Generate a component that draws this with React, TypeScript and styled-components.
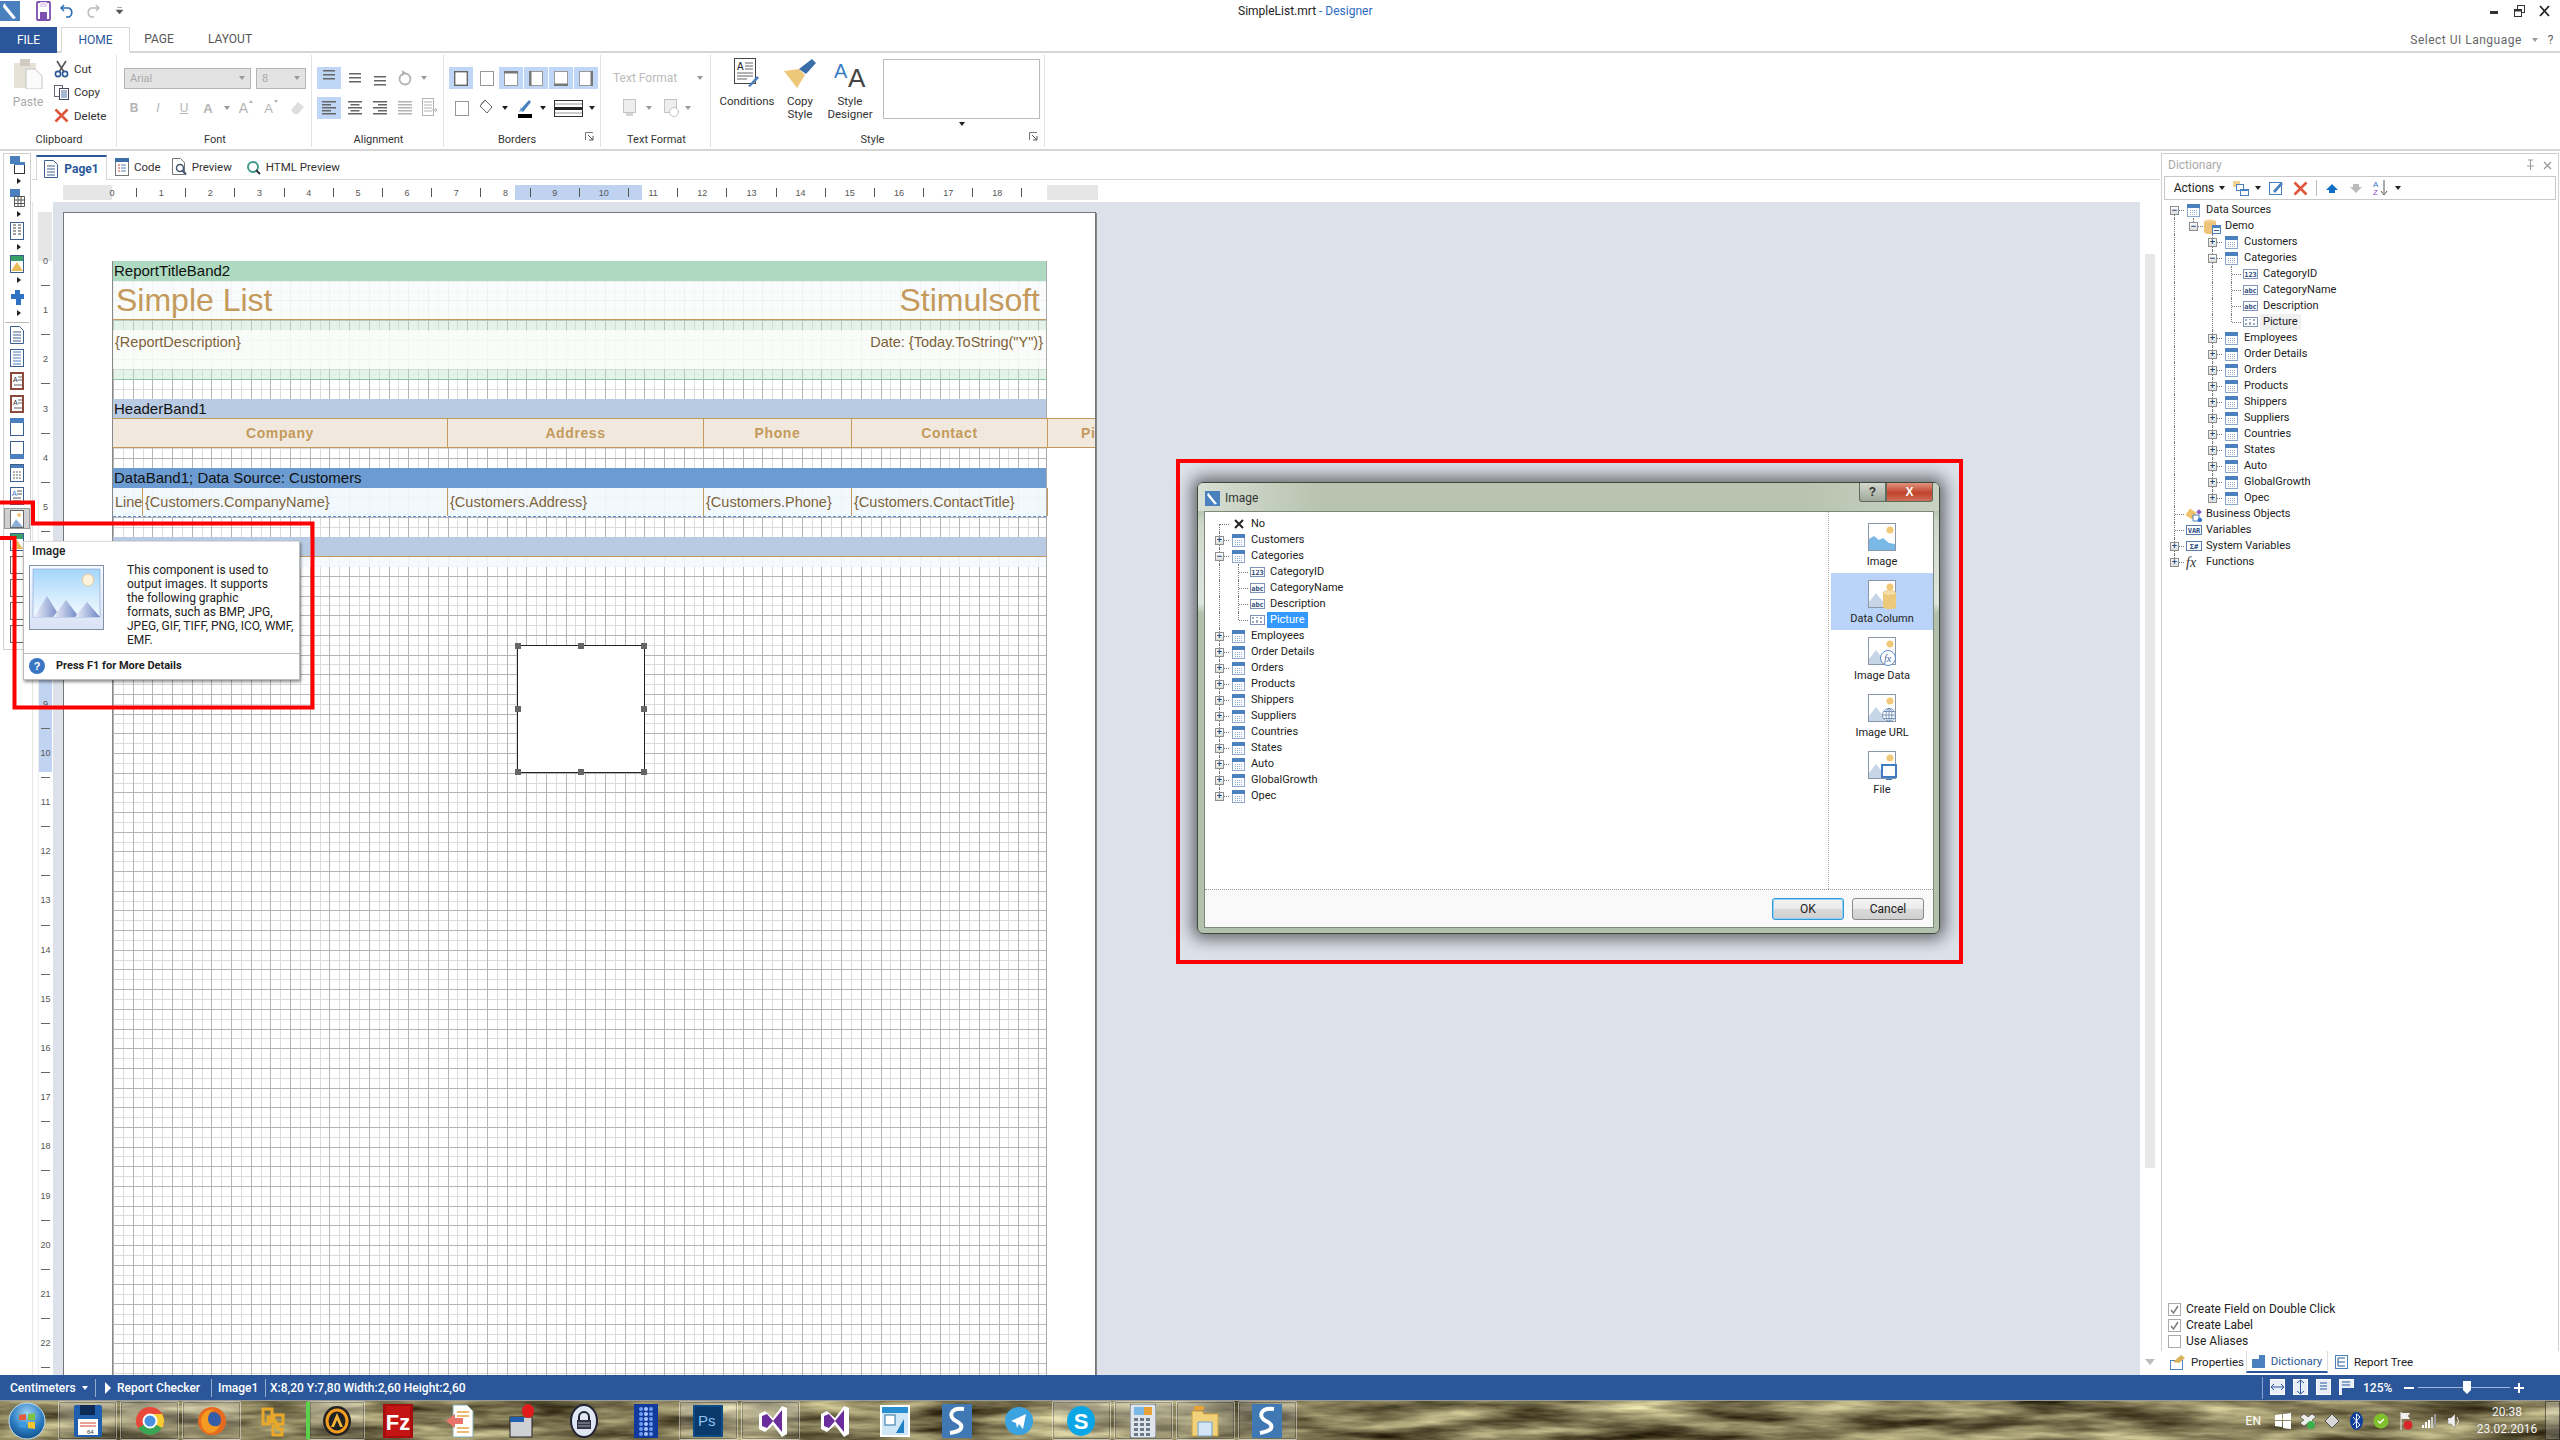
import React from 'react';
import styled, { createGlobalStyle } from 'styled-components';

const UI = `"Roboto","Noto Sans",sans-serif`;
const ARIAL = `"Liberation Sans",Arial,sans-serif`;
const BLUE = '#2b579a';
const TAN = '#c49a5c';

const Global = createGlobalStyle`
  html, body { margin: 0; padding: 0; width: 2560px; height: 1440px; overflow: hidden; background: #fff; }
  body { font-family: ${UI}; font-size: 12px; color: #222; }
  svg { display: block; flex: none; }
`;

const Frame = styled.div`position: relative; width: 2560px; height: 1440px; display: flex; flex-direction: column; overflow: hidden; background: #fff;`;

/* ---------- title ---------- */
const TitleBar = styled.div`height: 27px; flex: none; box-sizing: border-box; padding-bottom: 6px; display: grid; grid-template-columns: 1238px 140px 1fr; align-items: center;`;
const Quick = styled.div`display: flex; align-items: center; gap: 0; height: 21px;`;
const QuickSlot = styled.div<{ $w: number }>`width: ${p => p.$w}px; display: flex; justify-content: center;`;
const TitleText = styled.div`font-size: 12px; white-space: nowrap; color: #222; span { color: #2b6cc4; }`;
const WinButtons = styled.div`display: flex; justify-content: flex-end; align-items: center; gap: 14px; padding-right: 10px;`;

const TabRow = styled.div`height: 26px; box-sizing: border-box; flex: none; display: flex; border-bottom: 2px solid #d6d6d6; align-items: stretch; position: relative;`;
const FileTab = styled.div`width: 57px; background: ${BLUE}; color: #fff; display: flex; align-items: center; justify-content: center; font-size: 12px; margin-bottom: -2px;`;
const RTab = styled.div<{ $on?: boolean; $w: number }>`
  width: ${p => p.$w}px; box-sizing: border-box; display: flex; align-items: center; justify-content: center; font-size: 12px;
  color: ${p => (p.$on ? BLUE : '#555')}; background: #fff;
  ${p => (p.$on ? 'border: 1px solid #d6d6d6; border-bottom: 2px solid #fff; margin-bottom: -2px; margin-left: 4px;' : '')}
`;
const LangBox = styled.div`margin-left: auto; display: flex; align-items: center; gap: 10px; color: #666; font-size: 12px; letter-spacing: .5px; padding: 2px 6px 0 0;`;

/* ---------- ribbon ---------- */
const Ribbon = styled.div`height: 98px; box-sizing: border-box; flex: none; display: flex; border-bottom: 2px solid #d6d6d6;`;
const Group = styled.div<{ $w: number }>`width: ${p => p.$w}px; box-sizing: border-box; flex: none; height: 92px; margin-top: 2px; display: flex; flex-direction: column; border-right: 1px solid #e2e2e2; position: relative;`;
const GroupBody = styled.div<{ $pl?: number }>`height: 76px; flex: none; display: flex; padding-left: ${p => p.$pl ?? 0}px;`;
const GroupLabel = styled.div<{ $pr?: number }>`flex: 1; display: flex; align-items: center; justify-content: center; font-size: 11px; color: #333; padding: 0 ${p => p.$pr ?? 0}px 0 2px;`;
const Launcher = styled.div`position: absolute; right: 6px; bottom: 6px;`;
const Rows = styled.div`display: flex; flex-direction: column; gap: 8px; padding-top: 12px;`;
const ToolRow = styled.div`display: flex; align-items: center; height: 22px;`;
const Cell = styled.div<{ $w?: number; $on?: boolean }>`
  width: ${p => p.$w ?? 25}px; box-sizing: border-box; height: 22px; display: flex; align-items: center; justify-content: center; flex: none;
  background: ${p => (p.$on ? '#bfd6f6' : 'transparent')}; border-right: ${p => (p.$on ? '1px solid #fff' : '0')};
`;
const Combo = styled.div<{ $w: number }>`
  width: ${p => p.$w}px; height: 21px; border: 1px solid #b5b5b5; box-sizing: border-box; background: #e3e3e3; margin-right: 5px;
  display: flex; align-items: center; justify-content: space-between; padding: 0 5px; color: #aaa; font-size: 11px;
`;
const DisLetter = styled.span<{ $b?: boolean; $i?: boolean; $u?: boolean; $s?: number }>`
  font-family: ${ARIAL}; color: #b4b4b4; font-size: ${p => p.$s ?? 12}px;
  font-weight: ${p => (p.$b ? 700 : 400)}; font-style: ${p => (p.$i ? 'italic' : 'normal')};
  text-decoration: ${p => (p.$u ? 'underline' : 'none')};
`;
const GrowMark = styled.span<{ $down?: boolean }>`align-self: flex-start; margin: 3px 0 0 1px; width: 0; height: 0; border-left: 2px solid transparent; border-right: 2px solid transparent;
  ${p => (p.$down ? 'border-top: 3px solid #b4b4b4;' : 'border-bottom: 3px solid #b4b4b4;')}`;
const Caret = styled.span<{ $c?: string }>`width: 0; height: 0; border-left: 3px solid transparent; border-right: 3px solid transparent; border-top: 4px solid ${p => p.$c ?? '#999'}; flex: none;`;
const PasteCol = styled.div`width: 34px; margin-left: 11px; display: flex; flex-direction: column; align-items: center; padding-top: 3px; gap: 6px; color: #aaa; font-size: 12px;`;
const SmallCol = styled.div`margin-left: 9px; display: flex; flex-direction: column; padding-top: 2px;`;
const SmallBtn = styled.div`height: 23.5px; display: flex; align-items: center; gap: 5px; font-size: 11.5px; color: #333;`;
const BigBtn = styled.div<{ $w: number }>`width: ${p => p.$w}px; display: flex; flex-direction: column; align-items: center; padding-top: 3px; font-size: 11.5px; color: #333; text-align: center; line-height: 13px; gap: 7px;`;
const StyleCol = styled.div`display: flex; flex-direction: column; align-items: center; gap: 3px; padding-top: 4px;`;
const StylePreview = styled.div`width: 157px; height: 60px; border: 1px solid #bbb; box-sizing: border-box;`;
const FormatText = styled.div`width: 96px; color: #bbb; font-size: 12px; padding-left: 12px; box-sizing: border-box;`;

/* ---------- main ---------- */
const Main = styled.div`flex: 1; min-height: 0; display: flex;`;
const Toolbox = styled.div`width: 28px; margin: 2px 0 0 3px; height: 497px; flex: none; box-sizing: border-box; border: 1px solid #d0d0d0; display: flex; flex-direction: column; align-items: center;`;
const ToolPair = styled.div`height: 33px; flex: none; display: flex; flex-direction: column; align-items: center;`;
const ToolIco = styled.div<{ $on?: boolean }>`height: ${p => (p.$on ? 21 : 23)}px; width: 26px; flex: none; display: flex; align-items: center; justify-content: center;
  ${p => (p.$on ? 'background:#d0d0d0; border: 1px solid #999; box-sizing: border-box; margin: 1px 0;' : '')}`;
const ToolPairIco = styled.div`height: 21px; display: flex; align-items: center;`;
const ToolArrow = styled.div`height: 12px; display: flex; align-items: center; width: 0; border-left: 0;
  &::before { content: ''; border-top: 3px solid transparent; border-bottom: 3px solid transparent; border-left: 4px solid #222; }`;
const ToolSep = styled.div`height: 1px; width: 24px; background: #bbb; margin: 3px 0 0; flex: none;`;

const Center = styled.div`flex: 1; min-width: 0; display: flex; flex-direction: column; margin-left: 1px;`;
const DocTabs = styled.div`height: 28px; flex: none; display: flex; align-items: stretch; gap: 11px; padding-left: 4px; border-bottom: 1px solid #d8d8d8; margin-right: 0;`;
const PageTab = styled.div`width: 71px; margin-top: 4px; margin-bottom: -1px; box-sizing: border-box; border-top: 2px solid ${BLUE}; border-left: 1px solid #d8d8d8; border-right: 1px solid #d8d8d8; background: #fff; display: flex; align-items: center; justify-content: center; gap: 6px; font-weight: 700; color: ${BLUE}; font-size: 12px;`;
const DocItem = styled.div<{ $ml?: number }>`display: flex; align-items: center; gap: 5px; padding-top: 4px; font-size: 11.5px; color: #333; margin-left: ${p => p.$ml ?? 0}px;`;

const HRuler = styled.div`height: 15px; width: 1035px; margin: 5px 0 2px 31px; background: #e6e6e6; display: flex; flex: none;`;
const RulerTrack = styled.div`margin-left: 49px; width: 935px; height: 15px; background: #fff; display: flex; position: relative;`;
const RulerCell = styled.div<{ $first?: boolean }>`width: 24.6px; flex: none; display: flex; align-items: center; justify-content: center; position: relative; font: 9px ${ARIAL}; color: #555; margin-left: ${p => (p.$first ? '-12.3px' : 0)};`;
const RulerTick = styled.div`width: 1px; height: 9px; background: #555;`;
const RulerMark = styled.div`position: absolute; left: 403px; top: 0; width: 127px; height: 15px; background: #bfd3f0;`;

const Workspace = styled.div`flex: 1; min-height: 0; display: flex;`;
const VRuler = styled.div`width: 21px; flex: none; box-sizing: border-box; padding: 10px 2px 0 5px; border-left: 1px solid #e6e6e6; overflow: hidden;`;
const VTop = styled.div`height: 49px; width: 14px; background: #e6e6e6;`;
const VTrack = styled.div`position: relative; width: 14px; background: #fff; display: flex; flex-direction: column; border-left: 1px solid #eee; box-sizing: border-box;`;
const VCell = styled.div<{ $first?: boolean }>`height: 24.6px; flex: none; display: flex; align-items: center; justify-content: center; position: relative; font: 9px ${ARIAL}; color: #555; margin-top: ${p => (p.$first ? '-12.3px' : 0)};`;
const VTick = styled.div`width: 9px; height: 1px; background: #666;`;
const VMark = styled.div`position: absolute; left: 0; right: 0; top: 384px; height: 127px; background: #c0d3f1;`;

const Canvas = styled.div`flex: 1; min-width: 0; background: #dce1ea; padding: 10px 0 0 10px; box-sizing: border-box; overflow: hidden;`;
const Page = styled.div`width: 1033px; height: 1300px; background: #fff; border: 1px solid #777; border-bottom: 0; box-shadow: 1px 1px 0 #888; box-sizing: border-box; padding: 48px 0 0 48px; overflow: hidden; position: relative;`;
const Sheet = styled.div`
  position: relative; width: 935px; height: 1200px; box-sizing: border-box;
  border-left: 1px solid #888; border-right: 1px solid #aaa;
  background-color: #fff;
  background-image:
    repeating-linear-gradient(to right, #b4b4b4 0, #b4b4b4 1px, transparent 1px, transparent 19.68px),
    repeating-linear-gradient(to bottom, #b4b4b4 0, #b4b4b4 1px, transparent 1px, transparent 19.68px),
    repeating-linear-gradient(to right, #dcdcdc 0, #dcdcdc 1px, transparent 1px, transparent 9.84px),
    repeating-linear-gradient(to bottom, #dcdcdc 0, #dcdcdc 1px, transparent 1px, transparent 9.84px);
`;
const BandTitle = styled.div<{ $bg: string; $mt?: number; $h?: number }>`height: ${p => p.$h ?? 20}px; box-sizing: border-box; background: ${p => p.$bg}; margin-top: ${p => p.$mt ?? 0}px; font: 15px/19px ${ARIAL}; color: #111; padding-left: 1px; white-space: nowrap;`;
const TitleFill = styled.div`height: 39px; background: rgba(248,252,249,.86); border-bottom: 1px solid ${TAN}; display: flex; justify-content: space-between; align-items: center; padding: 0 6px 0 3px; box-sizing: border-box; font: 32px ${ARIAL}; color: ${TAN}; position: relative;`;
const GreenStrip = styled.div<{ $b?: boolean }>`height: 10px; background: rgba(190,226,205,.42); ${p => (p.$b ? 'border-bottom: 1px solid #8cc6a4;' : '')}`;
const DescFill = styled.div`height: 39px; background: rgba(249,252,250,.9); display: flex; justify-content: space-between; align-items: flex-start; padding: 4px 3px 0 2px; box-sizing: border-box; font: 14.5px ${ARIAL}; color: #7d6238;`;
const HeadRow = styled.div`height: 30px; width: 984px; display: flex; background: #f2e9de; border-top: 1px solid ${TAN}; border-bottom: 1px solid ${TAN}; box-sizing: border-box;`;
const HeadCell = styled.div<{ $w: number; $pad?: number }>`width: ${p => p.$w}px; flex: none; box-sizing: border-box; border-right: 1px solid ${TAN}; display: flex; align-items: center; justify-content: ${p => (p.$pad ? 'flex-start' : 'center')}; padding-left: ${p => p.$pad ?? 0}px; font: 700 14px ${ARIAL}; color: ${TAN}; letter-spacing: .6px;`;
const DataRow = styled.div`height: 29px; display: flex; background: rgba(240,247,254,.92); border-bottom: 1px dashed #5f92cc; box-sizing: border-box;`;
const DataCell = styled.div<{ $w: number }>`width: ${p => p.$w}px; flex: none; box-sizing: border-box; border-right: 1px solid ${TAN}; display: flex; align-items: center; padding-left: 2px; font: 14.5px ${ARIAL}; color: #7d6238; white-space: nowrap; overflow: hidden;`;
const FootBand = styled.div`height: 20px; margin-top: 20px; box-sizing: border-box; background: #b8cbe3; border-bottom: 1px solid ${TAN};`;
const FootFill = styled.div`height: 10px; background: rgba(245,249,254,.85);`;
const ImageBox = styled.div`position: absolute; left: 404px; top: 384px; width: 128px; height: 128px; background: #fff; border: 1px solid #222; box-sizing: border-box;`;
const Handle = styled.div<{ $x: number; $y: number }>`position: absolute; width: 6px; height: 6px; background: #666; left: calc(${p => p.$x}% - 3px); top: calc(${p => p.$y}% - 3px);`;

const ScrollCol = styled.div`width: 20px; flex: none; display: flex; flex-direction: column; align-items: center; padding: 52px 0 10px; box-sizing: border-box; background: #fff; justify-content: space-between;`;
const ScrollThumb = styled.div`width: 10px; height: 914px; background: #e8e8e8;`;
const ScrollDown = styled.div`width: 0; height: 0; border-left: 5px solid transparent; border-right: 5px solid transparent; border-top: 6px solid #bbb;`;

/* ---------- right panel ---------- */
const Dock = styled.div`width: 400px; flex: none; margin-top: 2px; display: flex; flex-direction: column;`;
const DockBox = styled.div`flex: 1; min-height: 0; margin: 0 1px 0 1px; border: 1px solid #cfcfcf; border-bottom: 0; display: flex; flex-direction: column;`;
const DockHead = styled.div`height: 22px; flex: none; display: flex; align-items: center; justify-content: space-between; padding: 0 5px 0 6px; color: #aaa; font-size: 12px;`;
const DockTools = styled.div`height: 24px; flex: none; margin: 0 2px 0 2px; border: 1px solid #c8c8c8; box-sizing: border-box; display: flex; align-items: center; padding-left: 7px; font-size: 12px; color: #222;`;
const ToolSlot = styled.div<{ $w: number }>`width: ${p => p.$w}px; display: flex; align-items: center; justify-content: center; flex: none;`;
const Tree = styled.div<{ $pl: number; $pt: number }>`flex: 1; min-height: 0; padding: ${p => p.$pt}px 0 0 ${p => p.$pl}px;`;
const TreeRow = styled.div`height: 16px; display: flex; align-items: center;`;
const Guide = styled.div<{ $v?: boolean }>`width: 19px; height: 16px; flex: none; position: relative;
  ${p => (p.$v ? `&::before { content: ''; position: absolute; left: 9px; top: 0; bottom: 0; border-left: 1px dotted #777; }` : '')}`;
const NodeCell = styled.div<{ $up?: boolean; $down?: boolean }>`
  width: 19px; height: 16px; flex: none; position: relative; display: flex; align-items: center; justify-content: center;
  &::before { content: ''; position: absolute; left: 9px; top: ${p => (p.$up ? 0 : 8)}px; bottom: ${p => (p.$down ? 0 : 8)}px; border-left: 1px dotted #777; }
  &::after { content: ''; position: absolute; left: 10px; right: 0; top: 8px; border-top: 1px dotted #777; }
`;
const Expander = styled.div`position: relative; z-index: 1; width: 9px; height: 9px; box-sizing: border-box; border: 1px solid #8f8f8f; background: linear-gradient(#fff, #dcdcdc); display: flex; align-items: center; justify-content: center; color: #24467a; font: 700 9px/7px ${ARIAL};`;
const IconSlot = styled.div`width: 19px; height: 16px; flex: none; display: flex; align-items: center; justify-content: center;`;
const NodeLabel = styled.div<{ $sel?: 'blue' | 'gray' }>`height: 16px; line-height: 16px; padding: 0 3px; white-space: nowrap; font-size: 11px; color: ${p => (p.$sel === 'blue' ? '#fff' : '#222')};
  background: ${p => (p.$sel === 'blue' ? '#3399ff' : p.$sel === 'gray' ? '#f0f0f0' : 'transparent')};`;
const Checks = styled.div`flex: none; padding: 0 0 2px 6px; display: flex; flex-direction: column;`;
const CheckRow = styled.div`height: 16px; display: flex; align-items: center; gap: 5px; font-size: 12px; color: #222;`;
const CheckBox = styled.div`width: 13px; height: 13px; box-sizing: border-box; border: 1px solid #aaa; display: flex; align-items: center; justify-content: center;`;
const DockTabs = styled.div`height: 24px; flex: none; display: flex; padding-left: 8px; font-size: 11.5px; color: #222;`;
const DockTab = styled.div<{ $on?: boolean; $w: number }>`width: ${p => p.$w}px; display: flex; align-items: center; justify-content: center; gap: 6px; box-sizing: border-box; margin-bottom: 2px;
  ${p => (p.$on ? `color: ${BLUE}; border-left: 1px solid #ddd; border-right: 1px solid #ddd; border-bottom: 2px solid ${BLUE};` : '')}`;

/* ---------- status + taskbar ---------- */
const StatusBar = styled.div`height: 25px; flex: none; background: ${BLUE}; color: #fff; display: flex; align-items: center; font-size: 12px; font-weight: 500;`;
const StatusPart = styled.div<{ $w: number; $sep?: boolean; $pl?: number }>`width: ${p => p.$w}px; flex: none; height: 18px; display: flex; align-items: center; gap: 6px; padding-left: ${p => p.$pl ?? 6}px; box-sizing: border-box; white-space: nowrap; ${p => (p.$sep ? 'border-right: 1px solid rgba(255,255,255,.5);' : '')}`;
const ZoomPanel = styled.div`margin-left: auto; width: 298px; height: 22px; border-left: 1px solid #8aa5cf; display: flex; align-items: center; box-sizing: border-box; padding-left: 7px; gap: 7px;`;
const ZoomText = styled.div`width: 34px; margin: 0 0 0 1px; font-weight: 500;`;
const ZoomSlider = styled.div`display: flex; align-items: center; gap: 4px;`;
const ZoomSign = styled.div`width: 10px; height: 2px; background: #fff; position: relative; flex: none;`;
const ZoomPlus = styled(ZoomSign)`&::after { content: ''; position: absolute; left: 4px; top: -4px; width: 2px; height: 10px; background: #fff; }`;
const ZoomTrack = styled.div`width: 92px; height: 1px; background: #9db6da; position: relative; flex: none;`;
const ZoomThumb = styled.div`position: absolute; left: 45px; top: -6px; width: 8px; height: 9px; background: #fff; &::after { content: ''; position: absolute; top: 9px; left: 0; border-left: 4px solid transparent; border-right: 4px solid transparent; border-top: 4px solid #fff; }`;

const Taskbar = styled.div`height: 40px; flex: none; box-sizing: border-box; border-top: 1px solid #9a9a9a; position: relative; display: flex; align-items: stretch; background: #6e6850; overflow: hidden;`;
const Wallpaper = styled.svg`position: absolute; left: 0; top: 0;`;
const Orb = styled.div`position: relative; width: 58px; box-sizing: border-box; padding-right: 4px; display: flex; align-items: center; justify-content: center; flex: none;`;
const TaskBtn = styled.div<{ $on?: boolean; $hot?: boolean }>`
  position: relative; width: 59px; margin-right: 3.1px; flex: none; display: flex; align-items: center; justify-content: center; box-sizing: border-box;
  ${p => (p.$on ? `background: linear-gradient(rgba(255,255,255,.28), rgba(255,255,255,.08)); border: 1px solid rgba(255,255,255,.35); box-shadow: inset 0 0 0 1px rgba(0,0,0,.25); border-radius: 2px;` : '')}
  ${p => (p.$hot ? `border-left: 4px solid #5ad14b;` : '')}
`;
const Tray = styled.div`position: relative; margin-left: auto; display: flex; align-items: center; color: #fff;`;
const TrayLang = styled.div`font-size: 12px; margin-right: 10px;`;
const TraySlot = styled.div`width: 24.5px; display: flex; justify-content: center;`;
const Clock = styled.div`width: 76px; margin-left: 2px; padding-top: 1px; text-align: center; font-size: 12px; line-height: 17px; color: #f3f3f3;`;
const ShowDesk = styled.div`width: 15px; height: 100%; background: rgba(255,255,255,.22); border: 1px solid rgba(0,0,0,.5); box-sizing: border-box;`;

/* ---------- overlays ---------- */
const RedPath = styled.svg`position: absolute; left: 0; top: 0; z-index: 5;`;
const Tip = styled.div`position: absolute; left: 23px; top: 541px; width: 277px; height: 139px; background: #fff; border: 1px solid #bbb; border-top-color: #ddd; box-sizing: border-box; box-shadow: 1px 2px 3px rgba(0,0,0,.45); z-index: 6; display: flex; flex-direction: column;`;
const TipTitle = styled.div`height: 18px; padding: 0 0 0 8px; box-sizing: border-box; font-size: 12px; font-weight: 500; color: #222; display: flex; align-items: center;`;
const TipBody = styled.div`height: 93px; flex: none; display: flex; padding: 5px 0 0 5px; gap: 23px; box-sizing: border-box;`;
const TipText = styled.div`font-size: 12px; line-height: 14px; color: #222; white-space: nowrap; margin-top: -2px;`;
const TipFoot = styled.div`flex: 1; border-top: 1px solid #bbb; display: flex; align-items: center; padding: 0 0 2px 5px; gap: 11px; font-size: 11px; font-weight: 700; color: #222;`;

const Highlight = styled.div`position: absolute; left: 1176px; top: 459px; width: 787px; height: 505px; box-sizing: border-box; border: 4px solid #f00; z-index: 4; display: flex; padding: 19px 19px 26px 17px;`;
const Dialog = styled.div`flex: 1; border-radius: 6px; border: 1px solid #3c4a3c; box-sizing: border-box; display: flex; flex-direction: column; padding: 0 5px 5px 6px;
  background: linear-gradient(#b8c4b0 0, #b8c4b0 28px, #cfd7cb 40px, #dfe6e2 120px, #b4c0ae 130px, #b4c0ae 100%);
  box-shadow: 0 0 16px 5px rgba(20,20,20,.6);`;
const DlgTitle = styled.div`height: 28px; flex: none; display: flex; background: linear-gradient(to right, #d8dfd4, #b8c4b0 16%, #b8c4b0 82%, #c8d1c2); margin: 0 -5px 0 -6px; padding: 0 6px 0 7px; border-radius: 5px 5px 0 0;`;
const DlgCaption = styled.div`display: flex; align-items: center; gap: 5px; color: #333; font-size: 12px; flex: 1; padding-top: 2px;`;
const CapBtn = styled.div<{ $w: number; $red?: boolean }>`width: ${p => p.$w}px; height: 19px; box-sizing: border-box; border: 1px solid #5f6b5f; border-top: 0; display: flex; align-items: center; justify-content: center; color: ${p => (p.$red ? '#fff' : '#333')}; font: 700 12px ${ARIAL};
  background: ${p => (p.$red ? 'linear-gradient(#e2937f, #c0432a 55%, #d0705a)' : 'linear-gradient(#d4d8d0, #9ea89a)')};
  border-radius: ${p => (p.$red ? '0 0 3px 0' : '0 0 0 3px')};`;
const DlgBody = styled.div`flex: 1; min-height: 0; background: #fff; border: 1px solid #7b8a78; display: flex; flex-direction: column;`;
const DlgMain = styled.div`flex: 1; min-height: 0; display: flex;`;
const DlgOptions = styled.div`width: 105px; flex: none; box-sizing: border-box; border-left: 1px dotted #aaa; padding: 4px 0 0 2px; display: flex; flex-direction: column;`;
const DlgOption = styled.div<{ $on?: boolean }>`height: 57px; flex: none; display: flex; flex-direction: column; align-items: center; justify-content: flex-start; gap: 3px; padding-top: 7px; box-sizing: border-box; font-size: 11px; color: #222; background: ${p => (p.$on ? '#b9d3f9' : 'transparent')};`;
const DlgFoot = styled.div`height: 38px; flex: none; border-top: 1px dotted #999; background: #f9f9f9; display: flex; justify-content: flex-end; align-items: center; gap: 8px; padding: 1px 9px 0 0; box-sizing: border-box;`;
const DlgBtn = styled.div<{ $def?: boolean }>`width: 72px; height: 22px; box-sizing: border-box; border-radius: 3px; border: 1px solid ${p => (p.$def ? '#2f9ad8' : '#8a8a8a')}; ${p => (p.$def ? 'box-shadow: inset 0 0 0 1px #8fd0f3;' : '')} background: linear-gradient(#f4f4f4 0, #ebebeb 48%, #d9d9d9 50%, #d0d0d0); display: flex; align-items: center; justify-content: center; font-size: 12px; color: #222;`;

/* ---------- icons ---------- */
const TableIcon = () => (
  <svg width="13" height="13"><rect x=".5" y=".5" width="12" height="12" fill="#fff" stroke="#8ba6c9" /><rect width="13" height="4" fill="#4a80bd" />
    {[6, 8, 10].map(y => [3, 5, 7, 9].map(x => <rect key={`${x}${y}`} x={x} y={y} width="1" height="1" fill="#8fb0d6" />))}</svg>
);
const FieldIcon = ({ t }: { t?: string }) => (
  <svg width="15" height="10"><rect x=".5" y=".5" width="14" height="9" fill="#fff" stroke="#7e93b5" />
    {t ? <text x="7.5" y="7.6" textAnchor="middle" fontSize="7" fontWeight="700" fontFamily="DejaVu Sans Mono" fill="#33507e">{t}</text>
      : <path d="M3 2v2M7 2v1M11 2v2M3 6v2M7 5v3M11 6v2" stroke="#33507e" />}</svg>
);
const XIcon = () => <svg width="12" height="12"><path d="M2 2l8 8M10 2l-8 8" stroke="#222" strokeWidth="2" /></svg>;
const DbIcon = () => (
  <svg width="17" height="15"><ellipse cx="6" cy="3" rx="6" ry="2.5" fill="#f2d08e" /><rect y="3" width="12" height="10" fill="#edc47a" /><ellipse cx="6" cy="13" rx="6" ry="2" fill="#edc47a" />
    <rect x="8.5" y="6.5" width="8" height="8" fill="#fff" stroke="#4a80bd" /><rect x="8" y="6" width="9" height="3" fill="#4a80bd" /><rect x="10" y="11" width="5" height="1" fill="#35609a" /></svg>
);
const BizIcon = () => (
  <svg width="16" height="15"><rect x="1" y="3" width="8" height="8" fill="#f0c36a" transform="rotate(35 5 7)" /><path d="M7 8h6v6H7z" fill="#fff" stroke="#4a80bd" /><rect x="11" y="3" width="4" height="4" fill="#8a5cc0" transform="rotate(45 13 5)" /><rect x="12" y="11" width="4" height="4" fill="#2f72c4" transform="rotate(45 14 13)" /></svg>
);
const BoxText = ({ t }: { t: string }) => (
  <svg width="16" height="10"><rect x=".5" y=".5" width="15" height="9" fill="#fff" stroke="#5b7bab" /><text x="8" y="7.6" textAnchor="middle" fontSize="7" fontWeight="700" fontFamily="DejaVu Sans Mono" fill="#2b4f82">{t}</text></svg>
);
const FxIcon = () => <svg width="16" height="15"><text x="0" y="12" fontSize="14" fontStyle="italic" fontFamily="Liberation Serif" fill="#333">fx</text></svg>;

type NodeDef = { label: string; depth: number; guides?: boolean[]; exp?: string; icon: React.ReactNode; sel?: 'blue' | 'gray'; up?: boolean; down?: boolean };
const Nodes = ({ rows }: { rows: NodeDef[] }) => (
  <>
    {rows.map((r, i) => (
      <TreeRow key={i}>
        {Array.from({ length: r.depth }).map((_, d) => <Guide key={d} $v={r.guides?.[d]} />)}
        <NodeCell $up={r.up ?? true} $down={r.down ?? true}>{r.exp ? <Expander>{r.exp === '+' ? '+' : '−'}</Expander> : null}</NodeCell>
        <IconSlot>{r.icon}</IconSlot>
        <NodeLabel $sel={r.sel}>{r.label}</NodeLabel>
      </TreeRow>
    ))}
  </>
);
const tableNames = ['Employees', 'Order Details', 'Orders', 'Products', 'Shippers', 'Suppliers', 'Countries', 'States', 'Auto', 'GlobalGrowth', 'Opec'];
const fieldDefs: [string, string | undefined][] = [['CategoryID', '123'], ['CategoryName', 'abc'], ['Description', 'abc'], ['Picture', undefined]];

const dictRows: NodeDef[] = [
  { label: 'Data Sources', depth: 0, exp: '-', icon: <TableIcon />, up: false },
  { label: 'Demo', depth: 1, guides: [true], exp: '-', icon: <DbIcon />, down: false },
  { label: 'Customers', depth: 2, guides: [true, false], exp: '+', icon: <TableIcon /> },
  { label: 'Categories', depth: 2, guides: [true, false], exp: '-', icon: <TableIcon /> },
  ...fieldDefs.map(([l, t], i) => ({ label: l, depth: 3, guides: [true, false, true], icon: <FieldIcon t={t} />, down: i < 3, sel: l === 'Picture' ? 'gray' as const : undefined })),
  ...tableNames.map((l, i) => ({ label: l, depth: 2, guides: [true, false], exp: '+', icon: <TableIcon />, down: i < tableNames.length - 1 })),
  { label: 'Business Objects', depth: 0, icon: <BizIcon /> },
  { label: 'Variables', depth: 0, icon: <BoxText t="VAR" /> },
  { label: 'System Variables', depth: 0, exp: '+', icon: <BoxText t="Σ#" /> },
  { label: 'Functions', depth: 0, exp: '+', icon: <FxIcon />, down: false },
];
const dlgRows: NodeDef[] = [
  { label: 'No', depth: 0, icon: <XIcon />, up: false },
  { label: 'Customers', depth: 0, exp: '+', icon: <TableIcon /> },
  { label: 'Categories', depth: 0, exp: '-', icon: <TableIcon /> },
  ...fieldDefs.map(([l, t], i) => ({ label: l, depth: 1, guides: [true], icon: <FieldIcon t={t} />, down: i < 3, sel: l === 'Picture' ? 'blue' as const : undefined })),
  ...tableNames.map((l, i) => ({ label: l, depth: 0, exp: '+', icon: <TableIcon />, down: i < tableNames.length - 1 })),
];

const ImgIcon = ({ v }: { v: 'image' | 'column' | 'data' | 'url' | 'file' }) => (
  <svg width="30" height="29">
    <rect x="1.5" y=".5" width="27" height={v === 'image' ? 27 : 27} fill="#fff" stroke="#8b97a8" />
    <circle cx="23" cy="7" r="3.5" fill="#f0c878" />
    {v === 'image'
      ? <path d="M2 27V16l5-3 5 4 4-2 6 5 6 1v6z" fill="#7ab8e6" />
      : <path d="M2 27V22l7-9 8 10v4z" fill="#c6d6e8" />}
    {v === 'column' && <g><rect x="16" y="13" width="13" height="14" fill="#edc97c" /><ellipse cx="22.5" cy="13" rx="6.5" ry="2.5" fill="#f6dda6" stroke="#e3bd70" strokeWidth=".6" /><ellipse cx="22.5" cy="27" rx="6.5" ry="2" fill="#edc97c" /></g>}
    {v === 'data' && <g><circle cx="21" cy="21" r="7.5" fill="#fff" stroke="#5b8ac4" /><text x="17" y="25" fontSize="10" fontStyle="italic" fontFamily="Liberation Serif" fill="#3a66a4">fx</text></g>}
    {v === 'url' && <g fill="none" stroke="#5b7fb0" strokeWidth=".8"><circle cx="22" cy="21" r="6.5" fill="#fff" /><ellipse cx="22" cy="21" rx="3" ry="6.5" /><path d="M15.5 21h13M16.5 17.5h11M16.5 24.500h11M22 14.500v13" /></g>}
    {v === 'file' && <g><rect x="15" y="14" width="14" height="12" fill="#fff" stroke="#3f7cc2" strokeWidth="2" /><path d="M22 26v2M19 28.500h6" stroke="#3f7cc2" /></g>}
  </svg>
);

const Gray = '#b4b4b4';
const PasteIcon = () => (
  <svg width="30" height="31"><rect x="1" y="5" width="22" height="25" rx="1" fill="#e6e2d8" /><rect x="7" y="1" width="10" height="7" fill="#d0ccc2" /><path d="M13 11h9l7 7v13H13z" fill="#fbfbfb" stroke="#c4c4c4" /></svg>
);
const CutIcon = () => <svg width="15" height="18"><path d="M3 1l7 11M12 1L5 12" stroke="#555" strokeWidth="1.6" /><circle cx="4" cy="14" r="2.6" fill="none" stroke="#2b579a" strokeWidth="1.6" /><circle cx="11" cy="14" r="2.6" fill="none" stroke="#2b579a" strokeWidth="1.6" /></svg>;
const CopyIcon = () => <svg width="15" height="15"><rect x=".5" y=".5" width="8" height="11" fill="#fff" stroke="#667" /><rect x="5.500" y="3.500" width="9" height="11" fill="#fff" stroke="#445" /><path d="M7 6h6M7 8h6M7 10h6M7 12h6" stroke="#4a6fa5" /></svg>;
const DelIcon = ({ s = 15 }: { s?: number }) => <svg width={s} height={s} viewBox="0 0 15 15"><path d="M1.500 1.500l12 12M13.500 1.500l-12 12" stroke="#e0563c" strokeWidth="2.6" /></svg>;
const Align = ({ mode, dir, c = '#666' }: { mode?: string; dir?: string; c?: string }) => {
  const ys = mode === 't' ? [0, 4, 8] : mode === 'm' ? [3, 7, 11] : mode === 'b' ? [6, 10, 14] : [1, 4, 7, 10, 13];
  const wd = (i: number) => (dir === 'j' ? 14 : i % 2 ? 9 : 14);
  const xs = (w: number) => (dir === 'c' ? (14 - w) / 2 : dir === 'r' ? 14 - w : 0);
  return <svg width="14" height="16">{ys.map((y, i) => <rect key={i} x={mode && mode !== 'x' ? 1 : xs(wd(i))} y={y} width={mode ? 12 : wd(i)} height="1.500" fill={c} />)}</svg>;
};
const RotIcon = () => <svg width="14" height="18"><circle cx="7" cy="10" r="5.500" fill="none" stroke={Gray} strokeWidth="1.800" /><path d="M4 1l4 3-4 3z" fill={Gray} /></svg>;
const SpecialAlign = () => <svg width="16" height="20"><rect x=".5" y=".5" width="11" height="17" fill="#fff" stroke={Gray} /><path d="M2 4h8M2 7h8M2 10h8M2 13h8" stroke={Gray} /><path d="M10 12h5l-2-2M15 12l-2 2" stroke={Gray} fill="none" /></svg>;
const Bord = ({ s, c = '#777' }: { s: string; c?: string }) => (
  <svg width="14" height="15"><rect x=".5" y=".5" width="13" height="14" fill="#fff" stroke={s === 'all' ? '#666' : '#999'} strokeWidth={s === 'all' ? 1.800 : 1} />
    {s === 't' && <rect width="14" height="2.500" fill={c} />}{s === 'b' && <rect y="12.500" width="14" height="2.500" fill={c} />}{s === 'l' && <rect width="2.500" height="15" fill={c} />}{s === 'r' && <rect x="11.500" width="2.500" height="15" fill={c} />}</svg>
);
const Fill = () => <svg width="16" height="18"><path d="M7 1l7 7-5 6-7-7z" fill="#fff" stroke="#666" /><path d="M3 6l4-5" stroke="#666" /></svg>;
const Pen = () => <svg width="16" height="20"><path d="M3 12L12 2l2 2-8 10z" fill="#4a80bd" /><path d="M4 9l-2 5 3-1" fill="#7aa7d8" /><rect x="1" y="16" width="14" height="4" fill="#000" /></svg>;
const LineStyle = () => <svg width="29" height="17"><rect x=".5" y=".5" width="28" height="16" fill="#fff" stroke="#333" /><rect x="1" y="7" width="27" height="3" fill="#222" /><path d="M1 4h27M1 13h27" stroke="#999" /></svg>;
const FmtIcon = ({ k }: { k: number }) => <svg width="15" height="18"><rect x=".5" y=".5" width="12" height="13" fill="#eee" stroke="#c4c4c4" />{k ? <circle cx="10" cy="13" r="4.500" fill="#fff" stroke="#c0c0c0" /> : <path d="M3 14h7v3H3z" fill="#d4d4d4" />}</svg>;
const Eraser = () => <svg width="15" height="14"><path d="M8 1l6 5-6 7H4L1 9z" fill="#ddd" /></svg>;
const Launch = () => <svg width="9" height="9"><path d="M.5 8V.5H8" fill="none" stroke="#777" /><path d="M3 3l5 5M8 4v4H4" fill="none" stroke="#555" /></svg>;
const ConditionsIcon = () => <svg width="26" height="30"><rect x=".5" y=".5" width="21" height="25" fill="#fff" stroke="#444" /><text x="3" y="12" fontSize="10" fill="#222" fontFamily="Liberation Sans">A</text><path d="M11 5h8M11 8h8M11 11h8M3 15h16M3 18h16M3 21h10" stroke="#666" /><path d="M14 28l9-10 2 2-9 9z" fill="#4a80bd" /></svg>;
const BroomIcon = () => <svg width="34" height="30"><path d="M1 13l15-2 6 6-8 13z" fill="#eec87a" /><path d="M16 11l13-10 4 4-10 11z" fill="#3a6ea8" /></svg>;
const StyleIcon = () => <svg width="33" height="30"><text x="0" y="20" fontSize="20" fill="#3a7cc2" fontFamily="Liberation Sans">A</text><text x="14" y="29" fontSize="26" fill="#444" fontFamily="Liberation Sans">A</text></svg>;

const TBox = ({ k }: { k: string }) => {
  const base = <rect x=".5" y=".5" width="13" height="17" fill="#fff" stroke="#3d5f8e" />;
  switch (k) {
    case 'stack': return <svg width="16" height="20"><rect x="1" y="1" width="10" height="8" fill="#4a80bd" /><rect x="5.500" y="7.500" width="10" height="11" fill="#fff" stroke="#333" /><rect x="5" y="7" width="11" height="3" fill="#4a80bd" /></svg>;
    case 'table': return <svg width="16" height="20"><rect x="1" y="1" width="10" height="8" fill="#4a80bd" /><path d="M5.500 8.500h10v10h-10zM5.500 12h10M5.500 15.500h10M9 8.500v10M12 8.500v10" fill="#fff" stroke="#555" /></svg>;
    case 'multi': return <svg width="14" height="18">{base}<path d="M3 3h3M8 3h3M3 6h3M8 6h3M3 9h3M8 9h3M3 12h3M8 12h3" stroke="#444" /></svg>;
    case 'picg': return <svg width="14" height="18">{base}<path d="M1 16l6-9 6 9z" fill="#e9bc5a" /><rect x="1" y="1" width="12" height="5" fill="#3aa06a" /></svg>;
    case 'puzzle': return <svg width="15" height="18"><path d="M1 6h4V2h5v4h4v5h-3v6H6v-6H1z" fill="#2f72c4" /></svg>;
    case 'doc': return <svg width="14" height="18"><path d="M.5.5h9l4 4v13H.5z" fill="#fff" stroke="#3d5f8e" /><path d="M3 6h8M3 9h8M3 12h8M3 15h8" stroke="#3d5f8e" /></svg>;
    case 'lines': return <svg width="14" height="18">{base}<path d="M3 3h8M3 6h8M3 9h8M3 12h8M3 15h8" stroke="#4a80bd" /></svg>;
    case 'code': return <svg width="14" height="18"><rect x=".5" y=".5" width="13" height="17" fill="#fff" stroke="#777" /><rect width="14" height="4" fill="#3d6ea8" /><path d="M3 7h2M3 10h2M3 13h2" stroke="#d0473a" /><path d="M6 7h5M6 10h5M6 13h5" stroke="#5a7fb0" /></svg>;
    case 'preview': return <svg width="15" height="18"><path d="M.5.5h8l4 4v12H.5z" fill="#fff" stroke="#777" /><circle cx="8" cy="10" r="3.500" fill="#fff" stroke="#44566c" strokeWidth="1.500" /><path d="M10.500 12.500l3.500 4" stroke="#44566c" strokeWidth="2" /></svg>;
    case 'ab': return <svg width="14" height="18"><rect width="14" height="18" fill="#fff" /><rect y="0" width="14" height="2" fill="#8b4a3a" /><rect y="16" width="14" height="2" fill="#8b4a3a" /><rect width="2" height="18" fill="#8b4a3a" /><rect x="12" width="2" height="18" fill="#8b4a3a" /><text x="3" y="10" fontSize="7" fill="#333" fontFamily="Liberation Sans">A</text><path d="M8 5h4M8 8h4M4 13h8" stroke="#666" /></svg>;
    case 'top': return <svg width="14" height="18">{base}<rect width="14" height="5" fill="#4a80bd" /></svg>;
    case 'bot': return <svg width="14" height="18">{base}<rect y="13" width="14" height="5" fill="#4a80bd" /></svg>;
    case 'grid': return <svg width="14" height="18">{base}<rect x="1" y="1" width="12" height="3" fill="#4a80bd" /><path d="M3 8h8M3 11h8M3 14h8" stroke="#666" strokeDasharray="2 1" /></svg>;
    case 'text': return <svg width="14" height="18">{base}<text x="2" y="9" fontSize="7" fill="#2f72c4" fontFamily="Liberation Sans">A</text><path d="M7 4h5M7 7h5M3 11h8M3 14h8" stroke="#555" /></svg>;
    case 'img': return <svg width="14" height="18"><rect x=".5" y=".5" width="13" height="17" fill="#fff" stroke="#666" /><circle cx="9" cy="5" r="2" fill="#f0c878" /><path d="M1 17l5-8 7 8z" fill="#8fb0d6" /></svg>;
    default: return <svg width="14" height="18"><rect x=".5" y=".5" width="13" height="17" fill="#fff" stroke="#666" /></svg>;
  }
};

const TipPicture = () => (
  <svg width="75" height="65">
    <defs>
      <linearGradient id="sky" x1="0" y1="0" x2="0" y2="1"><stop offset="0" stopColor="#a5d6fb" /><stop offset="1" stopColor="#f4fbff" /></linearGradient>
      <linearGradient id="mt" x1="0" y1="0" x2="1" y2="0"><stop offset="0" stopColor="#eef1fb" /><stop offset="1" stopColor="#6d86c4" /></linearGradient>
      <linearGradient id="ft" x1="0" y1="0" x2="0" y2="1"><stop offset="0" stopColor="#f8fbff" /><stop offset="1" stopColor="#d9e3f5" /></linearGradient>
    </defs>
    <rect x=".5" y=".5" width="74" height="64" fill="url(#ft)" stroke="#8492a8" />
    <rect x="4" y="4" width="67" height="48" fill="url(#sky)" stroke="#7f9fd0" strokeWidth=".6" />
    <ellipse cx="59" cy="15" rx="5.500" ry="6" fill="#fdf3dc" stroke="#efc89a" />
    <path d="M5 52L18 31l13 21z" fill="url(#mt)" /><path d="M24 52l13-17 13 17z" fill="url(#mt)" /><path d="M46 52l12-15 13 15z" fill="url(#mt)" />
  </svg>
);

const Save = ({ c }: { c: string }) => <svg width="15" height="20"><rect x="1" y="1" width="13" height="18" rx="1" fill="#fff" stroke={c} strokeWidth="1.800" /><rect x="4" y="11" width="7" height="7" fill={c} /><rect x="4" y="1" width="7" height="5" fill="#e8d8f2" /></svg>;
const AppLogo = ({ s = 20 }: { s?: number }) => <svg width={s} height={s}><rect width={s} height={s} fill="#4a80bd" /><path d={`M${s * .2} ${s * .1}L${s * .8} ${s * .85}L${s * .65} ${s * .9}L${s * .15} ${s * .3}z`} fill="#fff" /></svg>;

const ic: Record<string, React.ReactNode> = {
  orb: <svg width="38" height="38"><defs><radialGradient id="o" cx=".5" cy=".3" r=".8"><stop offset="0" stopColor="#9fd4f4" /><stop offset=".55" stopColor="#2b7cc0" /><stop offset="1" stopColor="#0b3f78" /></radialGradient></defs><circle cx="19" cy="19" r="18" fill="url(#o)" stroke="#c7dff0" /><path d="M11 13l7-1v6h-7z" fill="#e25a3c" /><path d="M20 12l7-1v7h-7z" fill="#7cc243" /><path d="M11 20h7v6l-7-1z" fill="#3f9be0" /><path d="M20 20h7v7l-7-1z" fill="#f5c531" /></svg>,
  save: <svg width="30" height="34"><rect x="1" y="1" width="28" height="32" rx="2" fill="#1f5fae" /><rect x="7" y="1" width="15" height="10" fill="#0d2a56" /><rect x="5" y="15" width="20" height="16" fill="#fff" /><path d="M7 19h16M7 22h16" stroke="#c43" /><text x="14" y="30" fontSize="6" fill="#333" fontFamily="Liberation Sans">64</text></svg>,
  chrome: <svg width="30" height="30" viewBox="0 0 30 30"><circle cx="15" cy="15" r="14" fill="#e8483a" /><path d="M15 15L27 22a14 14 0 0 1-12 7 14 14 0 0 1-12-7z" fill="#3aa655" /><path d="M15 15l12 7a14 14 0 0 0 0-14H15z" fill="#f7cc33" /><circle cx="15" cy="15" r="6.500" fill="#4a90e0" stroke="#fff" strokeWidth="2" /></svg>,
  firefox: <svg width="30" height="30"><circle cx="15" cy="15" r="14" fill="#e86a1e" /><circle cx="16" cy="14" r="8" fill="#355da8" /><path d="M4 15c0-7 6-12 13-11-4 2-6 5-6 9 0 6 6 9 12 6-2 5-6 8-10 8C8 27 4 21 4 15z" fill="#f39a21" /></svg>,
  chain: <svg width="26" height="32"><path d="M2 4h9v8h-4v3h6v-5h9v9h-5v5h4v6h-9v-9h3v-4H8v2H2z" fill="none" stroke="#e8a82a" strokeWidth="3" /></svg>,
  aimp: <svg width="30" height="32"><ellipse cx="15" cy="16" rx="14" ry="15" fill="#222" /><ellipse cx="15" cy="16" rx="10" ry="11" fill="none" stroke="#f39c1f" strokeWidth="3" /><path d="M15 8l6 14h-3l-3-7-3 7H9z" fill="#f5b63a" /></svg>,
  fz: <svg width="30" height="34"><rect width="30" height="34" fill="#a80d0d" /><rect x="3" y="2" width="24" height="30" fill="#c41515" /><text x="15" y="26" textAnchor="middle" fontSize="22" fontWeight="700" fill="#fff" fontFamily="Liberation Sans">Fz</text></svg>,
  docarrow: <svg width="30" height="34"><path d="M8 1h14l6 6v26H8z" fill="#fff" stroke="#8aa" /><path d="M12 8h12M12 12h12M12 24h12M12 28h12" stroke="#e8a440" strokeWidth="1.500" /><path d="M1 17l9-7v4h8v6h-8v4z" fill="#e8746a" /></svg>,
  balloon: <svg width="30" height="34"><rect x="3" y="13" width="22" height="20" fill="#cfd0d3" stroke="#222" /><rect x="3" y="13" width="14" height="5" fill="#1f5fae" /><ellipse cx="21" cy="7" rx="6" ry="7" fill="#e01b1b" /></svg>,
  keep: <svg width="30" height="34"><ellipse cx="15" cy="17" rx="13" ry="16" fill="#dfe7f4" stroke="#223" strokeWidth="2" /><path d="M10 17v-4a5 5 0 0 1 10 0v4" fill="none" stroke="#223" strokeWidth="2" /><rect x="8" y="16" width="14" height="9" fill="#334" /><path d="M9 19h12M9 22h12" stroke="#9ab" /></svg>,
  dots: <svg width="24" height="34"><rect width="24" height="34" fill="#123a9c" />{[5, 10, 15, 20, 25, 30].map(y => <g key={y}><circle cx="7" cy={y} r="2" fill="#6d9cf0" /><circle cx="12" cy={y} r="2" fill="#a8c6ff" /><circle cx="17" cy={y} r="2" fill="#6d9cf0" /></g>)}</svg>,
  ps: <svg width="30" height="32"><rect width="30" height="32" rx="1" fill="#0d4a86" /><rect x="2" y="2" width="26" height="28" fill="#0a3a6c" /><text x="5" y="21" fontSize="15" fill="#8cc4f0" fontFamily="Liberation Sans">Ps</text></svg>,
  vs: <svg width="32" height="34"><path d="M4 10l6-3 8 7 9-12 5 2v26l-5 3-9-12-8 7-6-3z" fill="#fff" /><path d="M7 12l5-2 6 7-6 7-5-2zM27 6v22l-9-11z" fill="#6a2d9b" /></svg>,
  sq: <svg width="30" height="32"><rect width="30" height="32" fill="#fff" /><rect x="2" y="2" width="26" height="28" fill="#cfe6f6" /><rect x="2" y="2" width="26" height="6" fill="#2a8fd0" /><rect x="5" y="10" width="10" height="10" fill="#fff" stroke="#2a6fa0" /><path d="M16 28l8-14v14z" fill="#1f7fbf" /></svg>,
  sti: <svg width="30" height="34"><rect width="30" height="34" fill="#3f78b2" /><path d="M22 5C8 3 6 13 14 17s8 10-6 12" fill="none" stroke="#fff" strokeWidth="4" /></svg>,
  tg: <svg width="30" height="30"><circle cx="15" cy="15" r="14" fill="#3ba3e0" /><path d="M7 15l15-7-3 15-4-5-2 4-1-5z" fill="#fff" /></svg>,
  sk: <svg width="30" height="32"><ellipse cx="15" cy="16" rx="14" ry="15" fill="#0ba6e6" /><text x="15" y="24" textAnchor="middle" fontSize="22" fontWeight="700" fill="#fff" fontFamily="Liberation Sans">S</text></svg>,
  calc: <svg width="26" height="34"><rect width="26" height="34" rx="2" fill="#dfe5ea" stroke="#5b6a78" /><rect x="4" y="3" width="18" height="8" fill="#7ab8e6" /><rect x="14" y="3" width="8" height="8" fill="#e8a23a" />{[14, 19, 24, 29].map(y => [4, 10, 16].map(x => <rect key={`${x}${y}`} x={x} y={y} width="4" height="3" fill="#6a7a88" />))}</svg>,
  folder: <svg width="30" height="34"><path d="M2 7h10l2 3h14v22H2z" fill="#f1d27a" stroke="#c9a03f" /><rect x="4" y="2" width="10" height="4" fill="#e8a23a" /><path d="M8 18h14v14H8z" fill="#d4e6f5" stroke="#6fa0c8" /></svg>,
};
const taskItems: { k: string; on?: boolean; hot?: boolean }[] = [
  { k: 'save', on: true }, { k: 'chrome', on: true }, { k: 'firefox', on: true }, { k: 'chain' }, { k: 'aimp', on: true, hot: true }, { k: 'fz' }, { k: 'docarrow' }, { k: 'balloon' }, { k: 'keep' }, { k: 'dots' },
  { k: 'ps', on: true }, { k: 'vs', on: true }, { k: 'vs' }, { k: 'sq' }, { k: 'sti' }, { k: 'tg' }, { k: 'sk', on: true }, { k: 'calc', on: true }, { k: 'folder', on: true }, { k: 'sti', on: true },
];
const trayIcons: React.ReactNode[] = [
  <svg width="16" height="16"><path d="M0 2l7-1v6H0zM8 1l8-1v7H8zM0 8h7v6l-7-1zM8 8h8v8l-8-1z" fill="#fff" /></svg>,
  <svg width="16" height="18"><path d="M4 2l4 3 4-3 4 3-4 3 4 3-4 3-4-3-4 3-4-3 4-3-4-3z" fill="#eee" stroke="#333" strokeWidth=".5" /><circle cx="11" cy="13" r="4" fill="#3cae4a" /></svg>,
  <svg width="16" height="16"><path d="M8 1l7 7-7 7-7-7z" fill="#d8d8d8" stroke="#555" /></svg>,
  <svg width="13" height="18"><ellipse cx="6.500" cy="9" rx="6.500" ry="9" fill="#0f3f9c" /><path d="M3 5l7 8-3.500 3V2L10 5l-7 8" fill="none" stroke="#fff" /></svg>,
  <svg width="16" height="16"><circle cx="8" cy="8" r="7.500" fill="#7fc02c" /><path d="M5 8l2 2 4-4" fill="none" stroke="#fff" strokeWidth="1.500" /></svg>,
  <svg width="14" height="18"><path d="M2 0v18" stroke="#eee" /><path d="M2 1h9l-2 3 2 3H2z" fill="#eee" /><circle cx="9" cy="13" r="4.500" fill="#d8252a" /></svg>,
  <svg width="16" height="14"><rect x="0" y="11" width="2" height="3" fill="#fff" /><rect x="3" y="8" width="2" height="6" fill="#fff" /><rect x="6" y="6" width="2" height="8" fill="#fff" /><rect x="9" y="3" width="2" height="11" fill="#ccc" /><rect x="12" y="0" width="2" height="14" fill="#999" /></svg>,
  <svg width="13" height="16"><path d="M0 5h3l4-4v14l-4-4H0z" fill="#eee" stroke="#666" strokeWidth=".4" /><path d="M9 4q3 4 0 8" fill="none" stroke="#ddd" /></svg>,
];
const ZoomIcon = ({ k }: { k: number }) => <svg width="16" height="17"><rect x=".5" y=".5" width="14" height="15" fill="#e8eef7" stroke="#fff" />{k === 0 && <path d="M1 8h13M4 5l-3 3 3 3M11 5l3 3-3 3" stroke="#2b579a" fill="none" />}{k === 1 && <path d="M7.500 1v14M4 4l3.500-3 3.500 3M4 12l3.500 3 3.500-3" stroke="#2b579a" fill="none" />}{k === 2 && <path d="M4 4h7M4 7h7M4 10h7" stroke="#2b579a" />}{k === 3 && <g><path d="M3 3h8M3 6h8" stroke="#2b579a" /><rect x="3" y="9" width="13" height="8" fill="#2b579a" /></g>}</svg>;

const headCols: [string, number][] = [['Company', 335], ['Address', 256], ['Phone', 148], ['Contact', 196]];
const dataCols: [string, number][] = [['Line', 30], ['{Customers.CompanyName}', 305], ['{Customers.Address}', 256], ['{Customers.Phone}', 148], ['{Customers.ContactTitle}', 196]];
const toolPairs = ['stack', 'table', 'multi', 'picg', 'puzzle'];
const toolSingles = ['doc', 'lines', 'ab', 'ab', 'top', 'bot', 'grid', 'text', 'img', 'picg', 'plain', 'plain', 'plain', 'plain'];

export default function App() {
  return (
    <Frame>
      <Global />
      <TitleBar>
        <Quick>
          <AppLogo />
          <QuickSlot $w={46}><Save c="#7d4fb0" /></QuickSlot>
          <QuickSlot $w={4}><svg width="16" height="14"><path d="M4 1L1 4l3 3M1 4h8a5 5 0 0 1 0 9H6" fill="none" stroke="#2b6cb4" strokeWidth="1.500" /></svg></QuickSlot>
          <QuickSlot $w={44}><svg width="16" height="14"><path d="M12 1l3 3-3 3M15 4H7a5 5 0 0 0 0 9h3" fill="none" stroke="#bbb" strokeWidth="1.500" /></svg></QuickSlot>
          <QuickSlot $w={10}><svg width="7" height="8"><path d="M1 .5h5M0 3l3.500 4L7 3z" fill="#555" stroke="#555" strokeWidth=".5" /></svg></QuickSlot>
        </Quick>
        <TitleText>SimpleList.mrt <span>- Designer</span></TitleText>
        <WinButtons>
          <svg width="10" height="6"><rect y="3" width="8" height="3" fill="#333" /></svg>
          <svg width="11" height="12"><rect x="3.500" y=".5" width="7" height="7" fill="none" stroke="#333" /><rect x=".5" y="4.500" width="7" height="7" fill="#fff" stroke="#333" /><rect x=".5" y="4.500" width="7" height="2" fill="#333" /></svg>
          <svg width="11" height="12"><path d="M1 1l9 10M10 1L1 11" stroke="#222" strokeWidth="1.800" /></svg>
        </WinButtons>
      </TitleBar>

      <TabRow>
        <FileTab>FILE</FileTab>
        <RTab $on $w={69}>HOME</RTab>
        <RTab $w={58}>PAGE</RTab>
        <RTab $w={84}>LAYOUT</RTab>
        <LangBox>Select UI Language <Caret /><span>?</span></LangBox>
      </TabRow>

      <Ribbon>
        <Group $w={117}>
          <GroupBody>
            <PasteCol><PasteIcon />Paste</PasteCol>
            <SmallCol>
              <SmallBtn><CutIcon />Cut</SmallBtn>
              <SmallBtn><CopyIcon />Copy</SmallBtn>
              <SmallBtn><DelIcon />Delete</SmallBtn>
            </SmallCol>
          </GroupBody>
          <GroupLabel>Clipboard</GroupLabel>
        </Group>
        <Group $w={195}>
          <GroupBody $pl={7}>
            <Rows>
              <ToolRow><Combo $w={127}>Arial<Caret /></Combo><Combo $w={50}>8<Caret /></Combo></ToolRow>
              <ToolRow>
                <Cell $w={20}><DisLetter $b>B</DisLetter></Cell>
                <Cell $w={28}><DisLetter $i>I</DisLetter></Cell>
                <Cell $w={24}><DisLetter $u>U</DisLetter></Cell>
                <Cell $w={24}><DisLetter $b $s={13}>A</DisLetter></Cell>
                <Cell $w={14}><Caret /></Cell>
                <Cell $w={24}><DisLetter $s={14}>A</DisLetter><GrowMark /></Cell>
                <Cell $w={26}><DisLetter $s={13}>A</DisLetter><GrowMark $down /></Cell>
                <Cell $w={26}><Eraser /></Cell>
              </ToolRow>
            </Rows>
          </GroupBody>
          <GroupLabel>Font</GroupLabel>
        </Group>
        <Group $w={132}>
          <GroupBody $pl={5}>
            <Rows>
              <ToolRow>
                <Cell $on><Align mode="t" /></Cell><Cell><Align mode="m" /></Cell><Cell><Align mode="b" /></Cell><Cell><RotIcon /></Cell><Cell $w={14}><Caret /></Cell>
              </ToolRow>
              <ToolRow>
                <Cell $on><Align dir="l" /></Cell><Cell><Align dir="c" /></Cell><Cell><Align dir="r" /></Cell><Cell><Align dir="j" c="#b4b4b4" /></Cell><Cell><SpecialAlign /></Cell>
              </ToolRow>
            </Rows>
          </GroupBody>
          <GroupLabel>Alignment</GroupLabel>
        </Group>
        <Group $w={157}>
          <GroupBody $pl={5}>
            <Rows>
              <ToolRow>
                <Cell $on><Bord s="all" /></Cell><Cell><Bord s="none" /></Cell><Cell $on><Bord s="t" /></Cell><Cell $on><Bord s="l" /></Cell><Cell $on><Bord s="b" /></Cell><Cell $on><Bord s="r" /></Cell>
              </ToolRow>
              <ToolRow>
                <Cell><Bord s="none" c="#555" /></Cell><Cell $w={24}><Fill /></Cell><Cell $w={14}><Caret $c="#222" /></Cell><Cell $w={26}><Pen /></Cell><Cell $w={10}><Caret $c="#222" /></Cell><Cell $w={41}><LineStyle /></Cell><Cell $w={6}><Caret $c="#222" /></Cell>
              </ToolRow>
            </Rows>
          </GroupBody>
          <GroupLabel $pr={12}>Borders</GroupLabel>
          <Launcher><Launch /></Launcher>
        </Group>
        <Group $w={110}>
          <GroupBody>
            <Rows>
              <ToolRow><FormatText>Text Format</FormatText><Caret /></ToolRow>
              <ToolRow>
                <Cell $w={19} />
                <Cell $w={20}><FmtIcon k={0} /></Cell><Cell $w={18}><Caret /></Cell><Cell $w={26}><FmtIcon k={1} /></Cell><Cell $w={8}><Caret /></Cell>
              </ToolRow>
            </Rows>
          </GroupBody>
          <GroupLabel>Text Format</GroupLabel>
        </Group>
        <Group $w={334}>
          <GroupBody>
            <BigBtn $w={72}><ConditionsIcon />Conditions</BigBtn>
            <BigBtn $w={34}><BroomIcon />Copy Style</BigBtn>
            <BigBtn $w={66}><StyleIcon />Style Designer</BigBtn>
            <StyleCol><StylePreview /><Caret $c="#222" /></StyleCol>
          </GroupBody>
          <GroupLabel $pr={12}>Style</GroupLabel>
          <Launcher><Launch /></Launcher>
        </Group>
      </Ribbon>

      <Main>
        <Toolbox>
          {toolPairs.map(k => <ToolPair key={k}><ToolPairIco><TBox k={k} /></ToolPairIco><ToolArrow /></ToolPair>)}
          <ToolSep />
          {toolSingles.map((k, i) => <ToolIco key={i} $on={i === 8}><TBox k={k} /></ToolIco>)}
        </Toolbox>
        <Center>
          <DocTabs>
            <PageTab><TBox k="doc" />Page1</PageTab>
            <DocItem $ml={-3}><TBox k="code" />Code</DocItem>
            <DocItem><TBox k="preview" />Preview</DocItem>
            <DocItem $ml={4}><svg width="14" height="15"><circle cx="6" cy="7" r="5" fill="#fff" stroke="#3f9a8c" strokeWidth="2" /><path d="M9 10l4 4" stroke="#334" strokeWidth="2" /></svg>HTML Preview</DocItem>
          </DocTabs>
          <HRuler>
            <RulerTrack>
              <RulerMark />
              {Array.from({ length: 38 }).map((_, i) => (
                <RulerCell key={i} $first={i === 0}>{i % 2 === 0 ? <span>{i / 2}</span> : <RulerTick />}</RulerCell>
              ))}
            </RulerTrack>
          </HRuler>
          <Workspace>
            <VRuler>
              <VTop />
              <VTrack>
                <VMark />
                {Array.from({ length: 46 }).map((_, i) => (
                  <VCell key={i} $first={i === 0}>{i % 2 === 0 ? <span>{i / 2}</span> : <VTick />}</VCell>
                ))}
              </VTrack>
            </VRuler>
            <Canvas>
              <Page>
                <Sheet>
                  <BandTitle $bg="#addac0">ReportTitleBand2</BandTitle>
                  <TitleFill><span>Simple List</span><span>Stimulsoft</span></TitleFill>
                  <GreenStrip />
                  <DescFill><span>{'{ReportDescription}'}</span><span>{'Date: {Today.ToString("Y")}'}</span></DescFill>
                  <GreenStrip $b />
                  <BandTitle $bg="#b8cbe3" $mt={19} $h={19}>HeaderBand1</BandTitle>
                  <HeadRow>
                    {headCols.map(([t, w]) => <HeadCell key={t} $w={w}>{t}</HeadCell>)}
                    <HeadCell $w={60} $pad={33}>Pi</HeadCell>
                  </HeadRow>
                  <BandTitle $bg="#6b9bd0" $mt={20}>DataBand1; Data Source: Customers</BandTitle>
                  <DataRow>{dataCols.map(([t, w]) => <DataCell key={t} $w={w}>{t}</DataCell>)}</DataRow>
                  <FootBand />
                  <FootFill />
                  <ImageBox>
                    {[0, 50, 100].map(x => [0, 50, 100].filter(y => !(x === 50 && y === 50)).map(y => <Handle key={`${x}${y}`} $x={x} $y={y} />))}
                  </ImageBox>
                </Sheet>
              </Page>
            </Canvas>
            <ScrollCol><ScrollThumb /><ScrollDown /></ScrollCol>
          </Workspace>
        </Center>
        <Dock>
          <DockBox>
            <DockHead>Dictionary
              <svg width="30" height="12"><path d="M5 1h5M7.500 1v6M4 7h7M7.500 7v4" stroke="#999" /><path d="M21 3l7 7M28 3l-7 7" stroke="#999" strokeWidth="1.300" /></svg>
            </DockHead>
            <DockTools>
              <ToolSlot $w={44}>Actions</ToolSlot>
              <ToolSlot $w={12}><Caret $c="#222" /></ToolSlot>
              <ToolSlot $w={24}><svg width="17" height="15"><rect x="1" y="0" width="7" height="6" fill="#efd38e" /><rect x="4.500" y="3.500" width="7" height="6" fill="#fff" stroke="#4a80bd" /><rect x="8.500" y="8.500" width="8" height="6" fill="#fff" stroke="#4a80bd" /><rect x="8" y="8" width="9" height="2" fill="#4a80bd" /></svg></ToolSlot>
              <ToolSlot $w={12}><Caret $c="#222" /></ToolSlot>
              <ToolSlot $w={24}><svg width="14" height="14"><rect x=".5" y="1.500" width="12" height="12" fill="#fff" stroke="#4a80bd" /><path d="M4 10L12 1l2 2-8 9z" fill="#4a80bd" /></svg></ToolSlot>
              <ToolSlot $w={24}><DelIcon /></ToolSlot>
              <ToolSlot $w={8}><svg width="1" height="16"><rect width="1" height="16" fill="#bbb" /></svg></ToolSlot>
              <ToolSlot $w={24}><svg width="12" height="9"><path d="M6 0l6 6H9v3H3V6H0z" fill="#0f6fc6" /></svg></ToolSlot>
              <ToolSlot $w={24}><svg width="12" height="9"><path d="M3 0h6v3h3L6 9 0 3h3z" fill="#bbb" /></svg></ToolSlot>
              <ToolSlot $w={24}><svg width="15" height="16"><text x="0" y="7" fontSize="8" fill="#2f72c4" fontFamily="Liberation Sans">A</text><text x="0" y="15" fontSize="8" fill="#8a4fc0" fontFamily="Liberation Sans">Z</text><path d="M11 0v13M8 11l3 4 3-4" stroke="#555" fill="none" /></svg></ToolSlot>
              <ToolSlot $w={12}><Caret $c="#222" /></ToolSlot>
            </DockTools>
            <Tree $pl={3} $pt={2}><Nodes rows={dictRows} /></Tree>
            <Checks>
              <CheckRow><CheckBox><svg width="9" height="9"><path d="M1 5l2.500 3L8 1" fill="none" stroke="#777" strokeWidth="1.400" /></svg></CheckBox>Create Field on Double Click</CheckRow>
              <CheckRow><CheckBox><svg width="9" height="9"><path d="M1 5l2.500 3L8 1" fill="none" stroke="#777" strokeWidth="1.400" /></svg></CheckBox>Create Label</CheckRow>
              <CheckRow><CheckBox />Use Aliases</CheckRow>
            </Checks>
          </DockBox>
          <DockTabs>
            <DockTab $w={78}><svg width="15" height="15"><rect x=".5" y="5.500" width="12" height="9" fill="#fff" stroke="#4a80bd" /><path d="M3 7l8-7 4 3-6 5z" fill="#d9b35c" /></svg>Properties</DockTab>
            <DockTab $on $w={82}><svg width="13" height="13"><rect y="4" width="7" height="9" fill="#4a80bd" /><rect x="7" width="6" height="13" fill="#4a80bd" /></svg>Dictionary</DockTab>
            <DockTab $w={92}><svg width="13" height="14"><rect x=".5" y=".5" width="12" height="13" fill="#fff" stroke="#4a80bd" /><path d="M3 3h7M5 7h5M5 11h5M3 3v8h2M3 7h2" stroke="#2b579a" fill="none" /></svg>Report Tree</DockTab>
          </DockTabs>
        </Dock>
      </Main>

      <StatusBar>
        <StatusPart $w={96} $sep $pl={10}>Centimeters<Caret $c="#fff" /></StatusPart>
        <StatusPart $w={116} $sep $pl={9}><svg width="6" height="12"><path d="M0 0l6 6-6 6z" fill="#fff" /></svg>Report Checker</StatusPart>
        <StatusPart $w={54} $sep>Image1</StatusPart>
        <StatusPart $w={230} $pl={4}>X:8,20  Y:7,80  Width:2,60  Height:2,60</StatusPart>
        <ZoomPanel>
          {[0, 1, 2, 3].map(k => <ZoomIcon key={k} k={k} />)}
          <ZoomText>125%</ZoomText>
          <ZoomSlider>
            <ZoomSign />
            <ZoomTrack><ZoomThumb /></ZoomTrack>
            <ZoomPlus />
          </ZoomSlider>
        </ZoomPanel>
      </StatusBar>

      <Taskbar>
        <Wallpaper width="2560" height="40">
          <defs>
            <filter id="wall" x="0" y="0" width="100%" height="100%" colorInterpolationFilters="sRGB">
              <feTurbulence type="fractalNoise" baseFrequency="0.01 0.07" numOctaves="4" seed="7" />
              <feColorMatrix values="1.100 0 0 0 -0.05  1.100 0 0 0 -0.08  0.900 0 0 0 -0.12  0 0 0 0 1" />
            </filter>
          </defs>
          <rect width="2560" height="40" filter="url(#wall)" />
        </Wallpaper>
        <Orb>{ic.orb}</Orb>
        {taskItems.map((t, i) => <TaskBtn key={i} $on={t.on} $hot={t.hot}>{ic[t.k]}</TaskBtn>)}
        <Tray>
          <TrayLang>EN</TrayLang>
          {trayIcons.map((n, i) => <TraySlot key={i}>{n}</TraySlot>)}
          <Clock>20:38<br />23.02.2016</Clock>
          <ShowDesk />
        </Tray>
      </Taskbar>

      <RedPath width="320" height="712">
        <path d="M0 502.500H33V523.500H312.500V707.500H14.500V538H0" fill="none" stroke="#f00" strokeWidth="4" />
      </RedPath>
      <Tip>
        <TipTitle>Image</TipTitle>
        <TipBody>
          <TipPicture />
          <TipText>This component is used to<br />output images. It supports<br />the following graphic<br />formats, such as BMP, JPG,<br />JPEG, GIF, TIFF, PNG, ICO, WMF,<br />EMF.</TipText>
        </TipBody>
        <TipFoot>
          <svg width="16" height="16"><circle cx="8" cy="8" r="8" fill="#3a75c4" /><text x="8" y="12" textAnchor="middle" fontSize="11" fontWeight="700" fill="#fff" fontFamily="Liberation Sans">?</text></svg>
          Press F1 for More Details
        </TipFoot>
      </Tip>

      <Highlight>
        <Dialog>
          <DlgTitle>
            <DlgCaption><AppLogo s={15} />Image</DlgCaption>
            <CapBtn $w={27}>?</CapBtn>
            <CapBtn $w={47} $red>X</CapBtn>
          </DlgTitle>
          <DlgBody>
            <DlgMain>
              <Tree $pl={5} $pt={4}><Nodes rows={dlgRows} /></Tree>
              <DlgOptions>
                <DlgOption><ImgIcon v="image" />Image</DlgOption>
                <DlgOption $on><ImgIcon v="column" />Data Column</DlgOption>
                <DlgOption><ImgIcon v="data" />Image Data</DlgOption>
                <DlgOption><ImgIcon v="url" />Image URL</DlgOption>
                <DlgOption><ImgIcon v="file" />File</DlgOption>
              </DlgOptions>
            </DlgMain>
            <DlgFoot>
              <DlgBtn $def>OK</DlgBtn>
              <DlgBtn>Cancel</DlgBtn>
            </DlgFoot>
          </DlgBody>
        </Dialog>
      </Highlight>
    </Frame>
  );
}
